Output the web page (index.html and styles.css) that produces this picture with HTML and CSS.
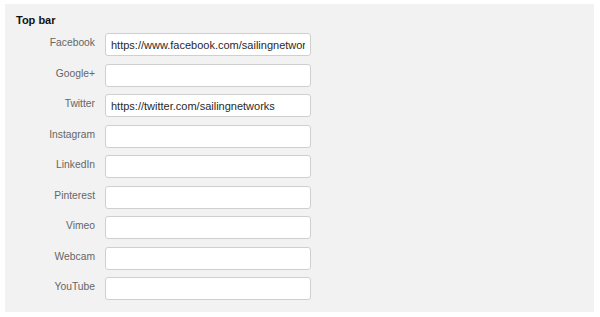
FILE: index.html
```html
<!DOCTYPE html>
<html>
<head>
<meta charset="utf-8">
<link rel="stylesheet" href="styles.css">
</head>
<body>
<div class="panel">
  <div class="title">Top bar</div>
  <div class="form">
    <label class="lbl">Facebook</label><input class="field" type="text" value="https://www.facebook.com/sailingnetworks">
    <label class="lbl">Google+</label><input class="field" type="text" value="">
    <label class="lbl">Twitter</label><input class="field" type="text" value="https://twitter.com/sailingnetworks">
    <label class="lbl">Instagram</label><input class="field" type="text" value="">
    <label class="lbl">LinkedIn</label><input class="field" type="text" value="">
    <label class="lbl">Pinterest</label><input class="field" type="text" value="">
    <label class="lbl">Vimeo</label><input class="field" type="text" value="">
    <label class="lbl">Webcam</label><input class="field" type="text" value="">
    <label class="lbl">YouTube</label><input class="field" type="text" value="">
  </div>
</div>
</body>
</html>
```
FILE: styles.css
```css
html, body {
  margin: 0;
  padding: 0;
  background: #ffffff;
}
body {
  padding: 4px 6px 5px 5px;
  font-family: "Liberation Sans", Arial, sans-serif;
}
.panel {
  background: #f2f2f2;
  height: 308px;
  box-sizing: border-box;
  padding: 10px 11px 0 11px;
}
.title {
  font-size: 11px;
  font-weight: bold;
  color: #111;
  line-height: 13px;
}
.form {
  display: grid;
  grid-template-columns: 79px 206px;
  column-gap: 10px;
  row-gap: 7.5px;
  margin-top: 6px;
  align-items: center;
}
.lbl {
  text-align: right;
  font-size: 10.3px;
  color: #666;
  line-height: 13px;
  margin-top: -4px;
}
.field {
  box-sizing: border-box;
  height: 23px;
  width: 206px;
  margin: 0;
  border: 1px solid #cfcfcf;
  border-radius: 3px;
  background: #fff;
  padding: 0 5px;
  font-family: "Liberation Sans", Arial, sans-serif;
  font-size: 11px;
  color: #2a2a2a;
  outline: none;
}
```
